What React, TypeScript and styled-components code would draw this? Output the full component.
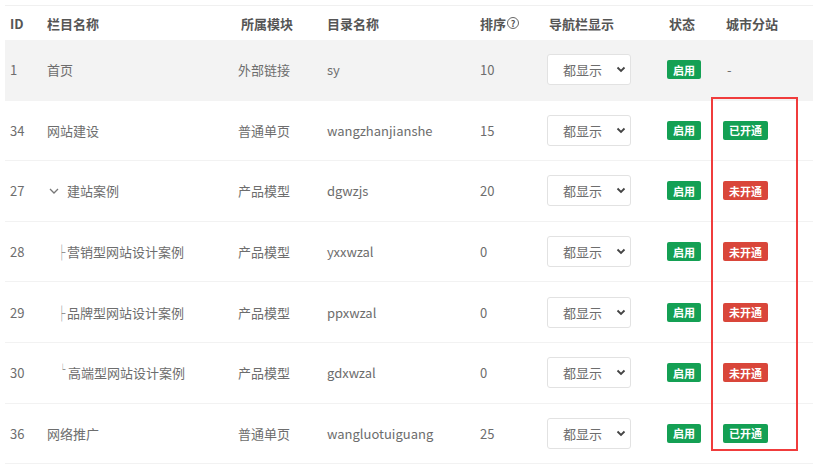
import React from "react";
import styled, { createGlobalStyle } from "styled-components";

const Global = createGlobalStyle`
  html, body { margin: 0; padding: 0; background: #fff; }
  body {
    font-family: "Noto Sans CJK SC", "Noto Sans", sans-serif;
    font-size: 13px;
    color: #6d6d6d;
  }
`;

const Page = styled.div`
  position: relative;
  width: 823px;
  height: 472px;
  padding: 5px 5px 0 5px;
  box-sizing: border-box;
`;

const COLS = "37px 193px 87px 153px 67px 122px 57px 1fr";

const Table = styled.div`
  width: 808px;
  border-top: 1px solid #f0f0f0;
`;

const HeadRow = styled.div`
  display: grid;
  grid-template-columns: ${COLS};
  height: 34px;
  align-items: center;
  font-weight: 700;
  color: #555;
`;

const Row = styled.div<{ $shade?: boolean }>`
  display: grid;
  grid-template-columns: ${COLS};
  height: 60.6px;
  box-sizing: border-box;
  align-items: center;
  background: ${(p) => (p.$shade ? "#f3f3f3" : "#fff")};
  border-bottom: 1px solid ${(p) => (p.$shade ? "#f3f3f3" : "#f2f2f2")};
`;

const Cell = styled.div<{ $pl?: number }>`
  padding-left: ${(p) => (p.$pl ?? 5)}px;
  white-space: nowrap;
  display: flex;
  align-items: center;
`;

const Help = styled.span`
  display: inline-flex;
  align-items: center;
  justify-content: center;
  width: 10px;
  height: 10px;
  border: 1.2px solid #666;
  border-radius: 50%;
  font-size: 9px;
  line-height: 1;
  margin-left: 1px;
  color: #555;
`;

const Prefix = styled.span<{ $w: number; $pad: number }>`
  display: inline-flex;
  align-items: center;
  width: ${(p) => p.$w}px;
  padding-left: ${(p) => p.$pad}px;
  box-sizing: border-box;
  flex: none;
`;

const TreeGlyph = styled.span<{ $size: number; $lift?: number }>`
  display: inline-block;
  font-size: ${(p) => p.$size}px;
  line-height: 1;
  color: #444;
  transform: translateY(${(p) => -(p.$lift ?? 0)}px) scaleX(0.5);
  transform-origin: left center;
`;

const SelectWrap = styled.div`
  position: relative;
  width: 84px;
  height: 31px;
`;

const Select = styled.select`
  appearance: none;
  -webkit-appearance: none;
  width: 84px;
  height: 31px;
  border: 1px solid #e2e2e2;
  border-radius: 3px;
  background: #fff;
  padding: 0 0 0 15px;
  font-family: inherit;
  font-size: 13px;
  color: #6d6d6d;
  outline: none;
`;

const Chevron = styled.svg`
  position: absolute;
  right: 5px;
  top: 12px;
  pointer-events: none;
`;

const Badge = styled.span<{ $tone: "green" | "red" }>`
  display: inline-flex;
  align-items: center;
  justify-content: center;
  height: 19px;
  padding: 0 6px;
  border-radius: 2px;
  font-size: 11px;
  font-weight: 700;
  color: #fff;
  background: ${(p) => (p.$tone === "green" ? "#14a054" : "#d9463a")};
`;

const Highlight = styled.div`
  position: absolute;
  left: 711px;
  top: 97px;
  width: 87px;
  height: 354px;
  box-sizing: border-box;
  border: 2px solid #f03c3c;
`;

type Item = {
  id: string;
  name: string;
  prefix?: "open" | "mid" | "last";
  module: string;
  dir: string;
  sort: string;
  city: "none" | "on" | "off";
};

const rows: Item[] = [
  { id: "1", name: "首页", module: "外部链接", dir: "sy", sort: "10", city: "none" },
  { id: "34", name: "网站建设", module: "普通单页", dir: "wangzhanjianshe", sort: "15", city: "on" },
  { id: "27", name: "建站案例", prefix: "open", module: "产品模型", dir: "dgwzjs", sort: "20", city: "off" },
  { id: "28", name: "营销型网站设计案例", prefix: "mid", module: "产品模型", dir: "yxxwzal", sort: "0", city: "off" },
  { id: "29", name: "品牌型网站设计案例", prefix: "mid", module: "产品模型", dir: "ppxwzal", sort: "0", city: "off" },
  { id: "30", name: "高端型网站设计案例", prefix: "last", module: "产品模型", dir: "gdxwzal", sort: "0", city: "off" },
  { id: "36", name: "网络推广", module: "普通单页", dir: "wangluotuiguang", sort: "25", city: "on" },
];

function NamePrefix({ kind }: { kind?: Item["prefix"] }) {
  if (kind === "open")
    return (
      <Prefix $w={20} $pad={2}>
        <svg width="10" height="8" viewBox="0 0 10 8">
          <path d="M1 2 L5 6 L9 2" fill="none" stroke="#777" strokeWidth="1.3" />
        </svg>
      </Prefix>
    );
  if (kind === "mid")
    return (
      <Prefix $w={20} $pad={11}>
        <TreeGlyph $size={15}>├</TreeGlyph>
      </Prefix>
    );
  if (kind === "last")
    return (
      <Prefix $w={21} $pad={13}>
        <TreeGlyph $size={11} $lift={3}>└</TreeGlyph>
      </Prefix>
    );
  return null;
}

export default function App() {
  return (
    <Page>
      <Global />
      <Table>
        <HeadRow>
          <Cell>ID</Cell>
          <Cell>栏目名称</Cell>
          <Cell $pl={6}>所属模块</Cell>
          <Cell>目录名称</Cell>
          <Cell>
            排序<Help>?</Help>
          </Cell>
          <Cell $pl={7}>导航栏显示</Cell>
          <Cell>状态</Cell>
          <Cell>城市分站</Cell>
        </HeadRow>
        {rows.map((r, i) => (
          <Row key={r.id} $shade={i === 0}>
            <Cell>{r.id}</Cell>
            <Cell>
              <NamePrefix kind={r.prefix} />
              {r.name}
            </Cell>
            <Cell $pl={3}>{r.module}</Cell>
            <Cell>{r.dir}</Cell>
            <Cell>{r.sort}</Cell>
            <Cell>
              <SelectWrap>
                <Select defaultValue="all">
                  <option value="all">都显示</option>
                </Select>
                <Chevron width="10" height="7" viewBox="0 0 10 7">
                  <path d="M1.5 1.5 L5 5 L8.5 1.5" fill="none" stroke="#444" strokeWidth="1.8" />
                </Chevron>
              </SelectWrap>
            </Cell>
            <Cell $pl={3}>
              <Badge $tone="green">启用</Badge>
            </Cell>
            <Cell $pl={2}>
              {r.city === "none" ? (
                <span style={{ paddingLeft: 4 }}>-</span>
              ) : (
                <Badge $tone={r.city === "on" ? "green" : "red"}>
                  {r.city === "on" ? "已开通" : "未开通"}
                </Badge>
              )}
            </Cell>
          </Row>
        ))}
      </Table>
      <Highlight />
    </Page>
  );
}
